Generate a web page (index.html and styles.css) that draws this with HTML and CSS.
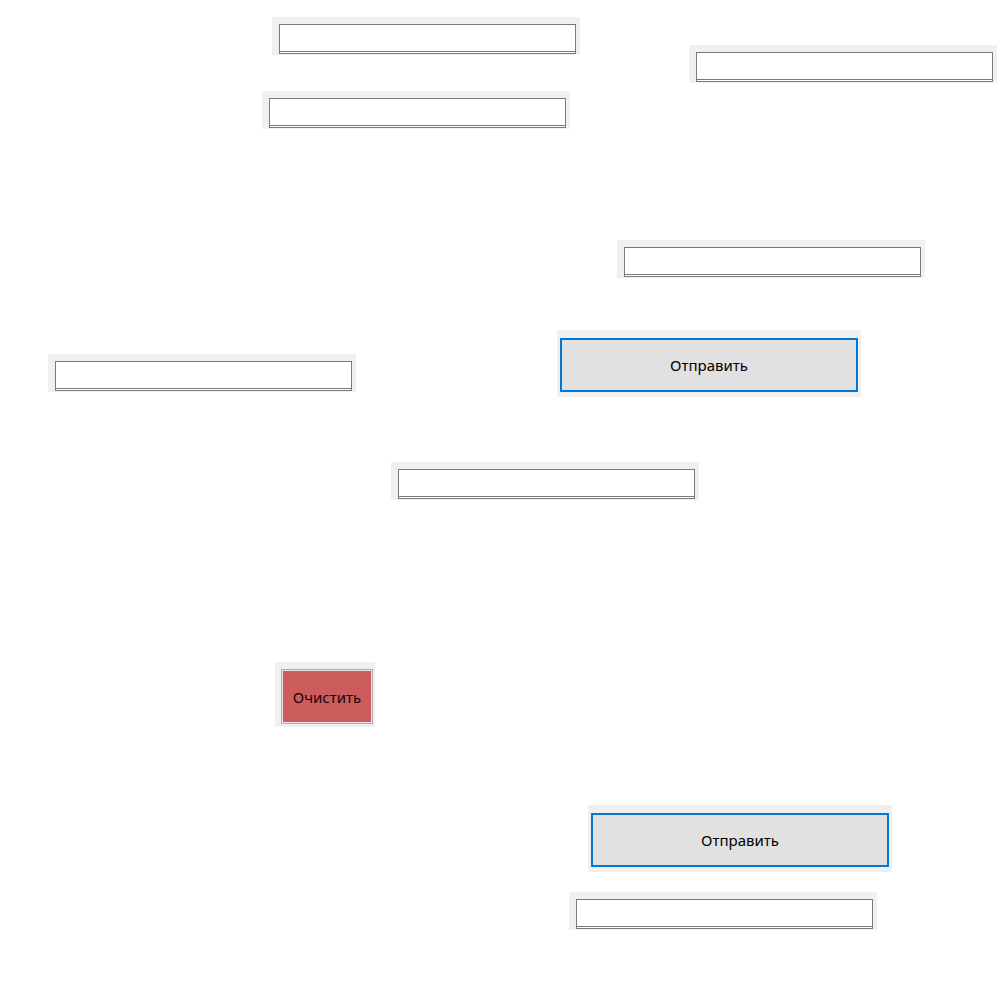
FILE: index.html
```html
<!DOCTYPE html>
<html>
<head>
  <meta charset="utf-8">
  <title>Form canvas</title>
  <link rel="stylesheet" href="styles.css">
</head>
<body>
  <div class="canvas">
    <div class="widget field" style="left: 272px; top: 17px;"><div class="textbox"></div></div>
    <div class="widget field" style="left: 689px; top: 45px;"><div class="textbox"></div></div>
    <div class="widget field" style="left: 262px; top: 91px;"><div class="textbox"></div></div>
    <div class="widget field" style="left: 617px; top: 240px;"><div class="textbox"></div></div>
    <div class="widget send" style="left: 557px; top: 330px;"><div class="btn btn-send">Отправить</div></div>
    <div class="widget field" style="left: 48px; top: 354px;"><div class="textbox"></div></div>
    <div class="widget field" style="left: 391px; top: 462px;"><div class="textbox"></div></div>
    <div class="widget clear" style="left: 275px; top: 662px;"><div class="btn btn-clear">Очистить</div></div>
    <div class="widget send" style="left: 588px; top: 805px;"><div class="btn btn-send">Отправить</div></div>
    <div class="widget field" style="left: 569px; top: 892px;"><div class="textbox"></div></div>
  </div>
</body>
</html>
```

FILE: styles.css
```css
body {
    margin: 0;
    background-color: #fff;
    font-family: "Noto Sans", "Open Sans", sans-serif;
}
.canvas {
    position: relative;
    width: 1000px;
    height: 1000px;
    overflow: hidden;
}
.widget {
    position: absolute;
    background-color: #f0f0f0;
    box-sizing: border-box;
}
.field {
    width: 308px;
    height: 38px;
    padding: 7px 4px 1px 7px;
}
.textbox {
    width: 297px;
    height: 30px;
    box-sizing: border-box;
    background-color: #fff;
    border: 1px solid #7a7a7a;
    border-bottom: 3px double #7a7a7a;
}
.send {
    width: 304px;
    height: 67px;
    padding: 8px 3px 5px 3px;
}
.clear {
    width: 100px;
    height: 65px;
    padding: 7px 2px 3px 6px;
}
.btn {
    box-sizing: border-box;
    height: 100%;
    display: flex;
    align-items: center;
    justify-content: center;
    font-size: 15px;
    color: #000;
}
.btn-send {
    background-color: #e1e1e1;
    border: 2px solid #0078d7;
}
.btn-clear {
    background-color: #cd5c5c;
    border: 1px solid #adadad;
    box-shadow: inset 0 0 0 1px #e8e8e8;
    color: #1a0505;
}
```
